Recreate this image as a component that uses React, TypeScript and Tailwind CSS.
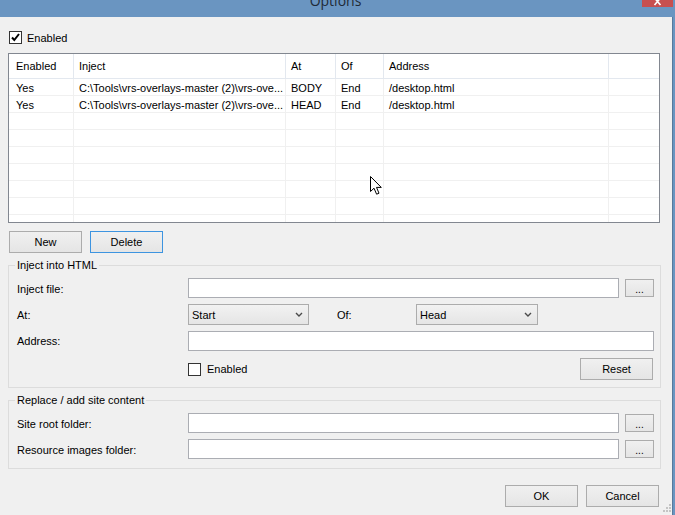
import React from "react";

const Chevron = () => (
  <svg width="8" height="5" viewBox="0 0 8 5">
    <path d="M1 1 L4 4 L7 1" fill="none" stroke="#4a4a4a" strokeWidth="1.4" />
  </svg>
);

const CheckBox = ({ checked }: { checked?: boolean }) => (
  <div className="w-[13px] h-[13px] border border-[#333333] bg-white flex items-center justify-center shrink-0">
    {checked && (
      <svg width="11" height="11" viewBox="0 0 11 11">
        <path d="M2 5.5 L4.3 8 L9 2" fill="none" stroke="#000" strokeWidth="2" />
      </svg>
    )}
  </div>
);

const Btn = ({ children, focus }: { children: React.ReactNode; focus?: boolean }) => (
  <div
    className={
      focus
        ? "w-[73px] h-[22px] flex items-center justify-center pt-[1px] border border-[#3d94e0] bg-linear-to-b from-[#f0f0f0] to-[#e5e5e5]"
        : "w-[73px] h-[22px] flex items-center justify-center pt-[1px] border border-[#acacac] bg-linear-to-b from-[#f0f0f0] to-[#e5e5e5]"
    }
  >
    {children}
  </div>
);

const Dots = () => (
  <div className="ml-[6px] w-[29px] h-[18px] flex items-center justify-center border border-[#acacac] bg-linear-to-b from-[#f0f0f0] to-[#e5e5e5] text-[10px] leading-[10px] pt-[3px]">
    ...
  </div>
);

const Combo = ({ value, w }: { value: string; w: string }) => (
  <div
    className={
      w === "a"
        ? "w-[121px] h-[21px] flex items-center justify-between pl-[3px] pr-[5px] border border-[#acacac] bg-linear-to-b from-[#f2f2f2] to-[#e5e5e5]"
        : "w-[122px] h-[21px] flex items-center justify-between pl-[3px] pr-[5px] border border-[#acacac] bg-linear-to-b from-[#f2f2f2] to-[#e5e5e5]"
    }
  >
    <span className="pt-[1px]">{value}</span>
    <Chevron />
  </div>
);

const cols = [
  "w-[65px] pl-[7px]",
  "w-[212px] pl-[5px]",
  "w-[50px] pl-[5px]",
  "w-[48px] pl-[5px]",
  "w-[225px] pl-[5px]",
  "w-[50px] pl-[5px]",
];

const headers = ["Enabled", "Inject", "At", "Of", "Address", ""];
const rows: string[][] = [
  ["Yes", "C:\\Tools\\vrs-overlays-master (2)\\vrs-ove...", "BODY", "End", "/desktop.html", ""],
  ["Yes", "C:\\Tools\\vrs-overlays-master (2)\\vrs-ove...", "HEAD", "End", "/desktop.html", ""],
  ["", "", "", "", "", ""],
  ["", "", "", "", "", ""],
  ["", "", "", "", "", ""],
  ["", "", "", "", "", ""],
  ["", "", "", "", "", ""],
  ["", "", "", "", "", ""],
  ["", "", "", "", "", ""],
];

export default function App() {
  return (
    <div className="w-[675px] h-[515px] overflow-hidden bg-[#f0f0f0] text-[11px] text-black font-['Liberation_Sans',Arial,sans-serif] relative">
      {/* Title bar */}
      <div className="relative h-[17px] bg-[#6a95c1] overflow-hidden">
        <div className="flex justify-center pr-[4px] -mt-[9px] text-[14px] leading-[20px] font-['Open_Sans',sans-serif] text-[#1e2a36]">
          Options
        </div>
        <div className="absolute right-[2px] top-0 w-[31px] h-[7px] bg-[#c75050] flex justify-center">
          <svg width="9" height="7" viewBox="0 0 9 7">
            <path d="M1.5 -2 L7.5 5 M7.5 -2 L1.5 5" stroke="#fff" strokeWidth="1.6" />
          </svg>
        </div>
      </div>

      <div className="flex">
        <div className="w-[672px] h-[498px] relative flex flex-col">
          {/* Enabled checkbox */}
          <div className="mt-[14px] ml-[9px] h-[13px] flex items-center gap-[5px]">
            <CheckBox checked />
            <span className="pt-[1px]">Enabled</span>
          </div>

          {/* Table */}
          <div className="mt-[9px] ml-[8px] w-[652px] h-[170px] border border-[#828790] bg-white overflow-hidden">
            <div className="flex h-[25px] border-b border-[#e3e8ef]">
              {headers.map((h, i) => (
                <div
                  key={i}
                  className={
                    i < 5
                      ? `${cols[i]} h-[24px] pt-[1px] flex items-center border-r border-[#e3e8ef]`
                      : `${cols[i]} h-[24px] pt-[1px] flex items-center`
                  }
                >
                  {h}
                </div>
              ))}
            </div>
            {rows.map((r, ri) => (
              <div key={ri} className="flex h-[17px] border-b border-[#f0f0f0]">
                {r.map((c, i) => (
                  <div
                    key={i}
                    className={
                      i < 5
                        ? `${cols[i]} h-[16px] pt-[1px] leading-[16px] whitespace-nowrap overflow-hidden border-r border-[#f0f0f0]`
                        : `${cols[i]} h-[16px] pt-[1px] leading-[16px] whitespace-nowrap overflow-hidden`
                    }
                  >
                    {c}
                  </div>
                ))}
              </div>
            ))}
          </div>

          {/* New / Delete */}
          <div className="mt-[8px] ml-[9px] flex gap-[8px]">
            <Btn>New</Btn>
            <Btn focus>Delete</Btn>
          </div>

          {/* Inject into HTML */}
          <div className="mt-[12px] ml-[8px] w-[653px] h-[123px] border border-[#dcdcdc] flex flex-col">
            <div className="-mt-[7px] ml-[6px] self-start h-[13px] leading-[13px] px-[2px] bg-[#f0f0f0]">
              Inject into HTML
            </div>
            <div className="mt-[6px] pl-[8px] flex items-center h-[20px]">
              <span className="w-[171px] pt-[2px]">Inject file:</span>
              <div className="w-[431px] h-[20px] bg-white border border-[#abadb3]" />
              <Dots />
            </div>
            <div className="mt-[6px] pl-[8px] flex items-center h-[21px]">
              <span className="w-[171px] pt-[1px]">At:</span>
              <Combo value="Start" w="a" />
              <span className="ml-[28px] w-[79px] pt-[1px]">Of:</span>
              <Combo value="Head" w="b" />
            </div>
            <div className="mt-[6px] pl-[8px] flex items-center h-[20px]">
              <span className="w-[171px] pt-[1px]">Address:</span>
              <div className="w-[466px] h-[20px] bg-white border border-[#abadb3]" />
            </div>
            <div className="mt-[7px] pl-[8px] pr-[7px] flex items-center h-[22px]">
              <span className="w-[171px]" />
              <CheckBox />
              <span className="ml-[6px] pt-[1px]">Enabled</span>
              <div className="ml-auto">
                <Btn>Reset</Btn>
              </div>
            </div>
          </div>

          {/* Replace / add site content */}
          <div className="mt-[12px] ml-[8px] w-[653px] h-[69px] border border-[#dcdcdc] flex flex-col">
            <div className="-mt-[7px] ml-[6px] self-start h-[13px] leading-[13px] px-[2px] bg-[#f0f0f0]">
              Replace / add site content
            </div>
            <div className="mt-[6px] pl-[8px] flex items-center h-[20px]">
              <span className="w-[171px] pt-[2px]">Site root folder:</span>
              <div className="w-[431px] h-[20px] bg-white border border-[#abadb3]" />
              <Dots />
            </div>
            <div className="mt-[6px] pl-[8px] flex items-center h-[20px]">
              <span className="w-[171px] pt-[2px]">Resource images folder:</span>
              <div className="w-[431px] h-[20px] bg-white border border-[#abadb3]" />
              <Dots />
            </div>
          </div>

          {/* OK / Cancel */}
          <div className="mt-[16px] ml-[505px] flex gap-[8px]">
            <Btn>OK</Btn>
            <Btn>Cancel</Btn>
          </div>

          {/* size grip */}
          <svg className="absolute right-[1px] bottom-[3px]" width="8" height="8" viewBox="0 0 8 8">
            <rect x="6" y="0" width="2" height="2" fill="#c4c4c4" />
            <rect x="3" y="3" width="2" height="2" fill="#c4c4c4" />
            <rect x="6" y="3" width="2" height="2" fill="#c4c4c4" />
            <rect x="0" y="6" width="2" height="2" fill="#c4c4c4" />
            <rect x="3" y="6" width="2" height="2" fill="#c4c4c4" />
            <rect x="6" y="6" width="2" height="2" fill="#c4c4c4" />
          </svg>
        </div>
        <div className="w-[3px] h-[498px] bg-[#6a95c1] border-l border-[#58799c]" />
      </div>

      {/* mouse cursor */}
      <svg className="absolute left-[370px] top-[176px]" width="13" height="20" viewBox="0 0 13 20">
        <path
          d="M0.5 0.5 L0.5 15.5 L4 12.2 L6.6 18.2 L9 17.2 L6.5 11.4 L11.3 11.4 Z"
          fill="#fff"
          stroke="#000"
          strokeWidth="1"
          strokeLinejoin="miter"
        />
      </svg>
    </div>
  );
}
